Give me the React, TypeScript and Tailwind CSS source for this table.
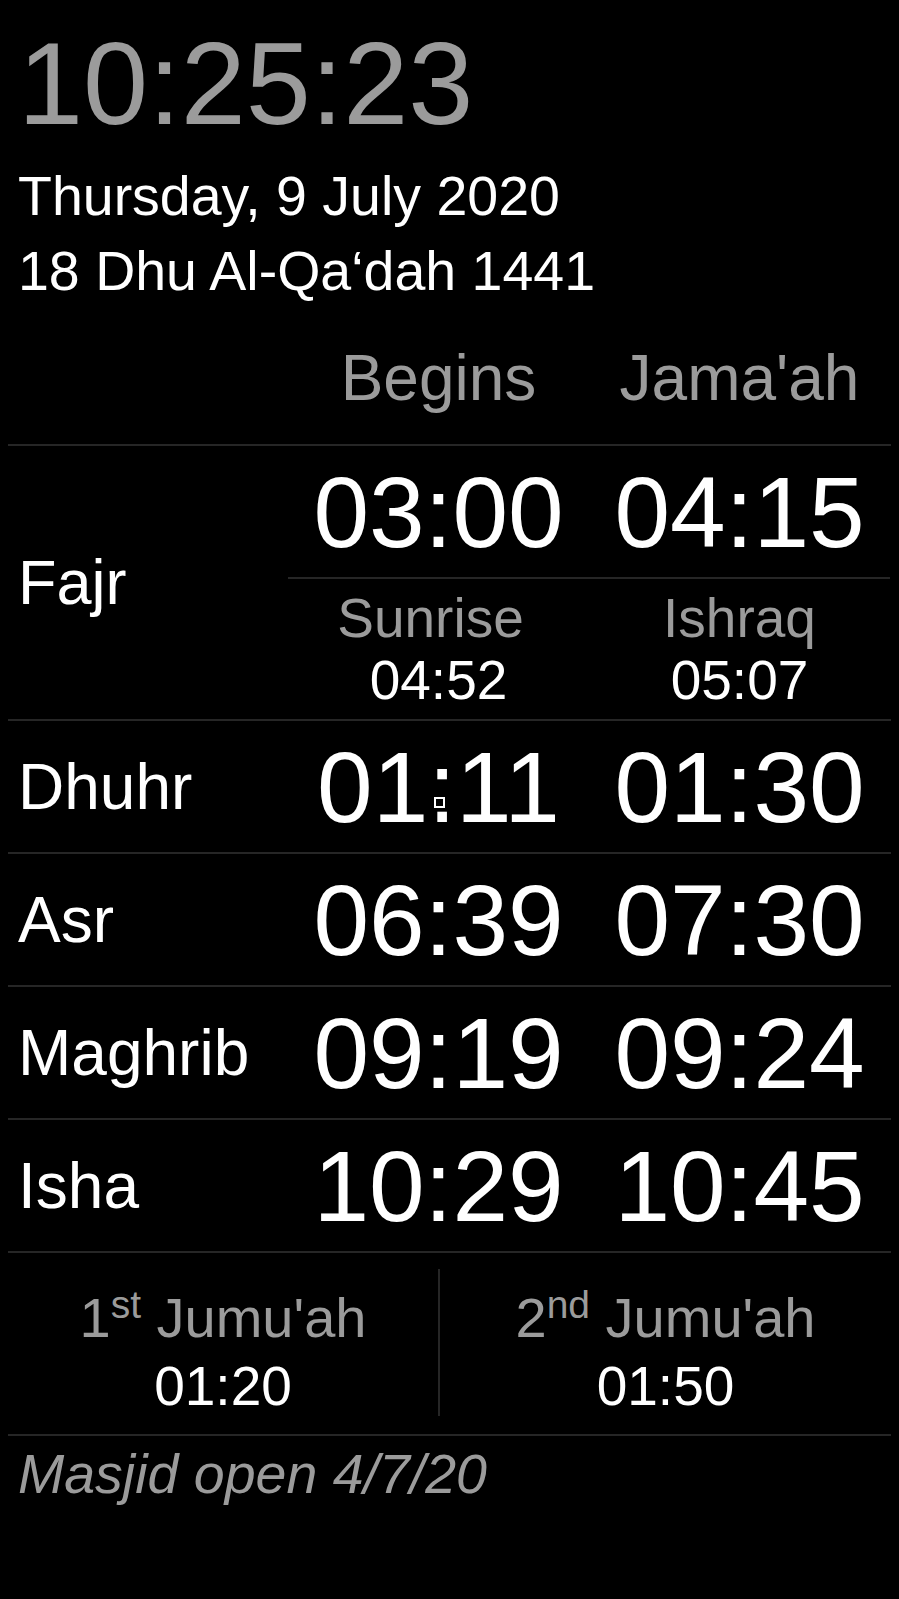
import React from "react";

const rows = [
  { name: "Dhuhr", begins: "01:11", jamaah: "01:30", marker: true },
  { name: "Asr", begins: "06:39", jamaah: "07:30" },
  { name: "Maghrib", begins: "09:19", jamaah: "09:24" },
  { name: "Isha", begins: "10:29", jamaah: "10:45" },
];

export default function App() {
  return (
    <div className="min-h-screen w-full bg-black font-['Liberation_Sans',Arial,sans-serif] text-white">
      <div className="px-[18px] pt-[25px]">
        <div className="text-[117px] leading-[117px] text-[#9b9b9b]">10:25:23</div>
        <div className="mt-[17px] text-[55.5px] leading-[75px] text-white">
          <div>Thursday, 9 July 2020</div>
          <div>18 Dhu Al-Qa‘dah 1441</div>
        </div>
      </div>

      <div className="mx-[8px]">
        {/* header */}
        <div className="grid grid-cols-[280px_301px_301px] border-b-2 border-[#262626] pt-[37px] pb-[34px] text-[64px] leading-[64px] text-[#9b9b9b]">
          <div />
          <div className="text-center">Begins</div>
          <div className="text-center">Jama'ah</div>
        </div>

        {/* Fajr */}
        <div className="grid grid-cols-[280px_602px] border-b-2 border-[#262626]">
          <div className="flex items-center pl-[10px] text-[63px] leading-[63px]">Fajr</div>
          <div className="flex flex-col">
            <div className="grid h-[131px] grid-cols-2 items-center text-center text-[100px] leading-[100px]">
              <div>03:00</div>
              <div>04:15</div>
            </div>
            <div className="grid h-[142px] grid-cols-2 border-t-2 border-[#262626] pt-[8px] text-center text-[55px] leading-[62px]">
              <div className="flex flex-col">
                <span className="pr-[16px] text-[#9b9b9b]">Sunrise</span>
                <span>04:52</span>
              </div>
              <div className="flex flex-col">
                <span className="text-[#9b9b9b]">Ishraq</span>
                <span>05:07</span>
              </div>
            </div>
          </div>
        </div>

        {rows.map((r) => (
          <div
            key={r.name}
            className="grid h-[133px] grid-cols-[280px_301px_301px] items-center border-b-2 border-[#262626]"
          >
            <div className="pl-[10px] text-[64px] leading-[64px]">{r.name}</div>
            <div className="relative text-center text-[100px] leading-[100px]">
              {r.begins}
              {r.marker && (
                <span className="absolute left-[146px] top-[60px] h-[11px] w-[11px] border-2 border-white" />
              )}
            </div>
            <div className="text-center text-[100px] leading-[100px]">{r.jamaah}</div>
          </div>
        ))}

        {/* Jumu'ah */}
        <div className="flex border-b-2 border-[#262626] pt-[16px] pb-[18px]">
          <div className="flex h-[147px] w-[432px] flex-col items-center border-r-2 border-[#262626] pt-[17px] text-[56px] leading-[63px]">
            <span className="text-[#9b9b9b]">
              1<span className="relative -top-[19px] text-[39px]">st</span> Jumu'ah
            </span>
            <span className="text-[55px]">01:20</span>
          </div>
          <div className="flex h-[147px] flex-1 flex-col items-center pt-[17px] text-[56px] leading-[63px]">
            <span className="text-[#9b9b9b]">
              2<span className="relative -top-[19px] text-[39px]">nd</span> Jumu'ah
            </span>
            <span className="text-[55px]">01:50</span>
          </div>
        </div>
      </div>

      <div className="px-[18px] pt-[7px] text-[55.5px] italic leading-[63px] text-[#9b9b9b]">
        Masjid open 4/7/20
      </div>
    </div>
  );
}
